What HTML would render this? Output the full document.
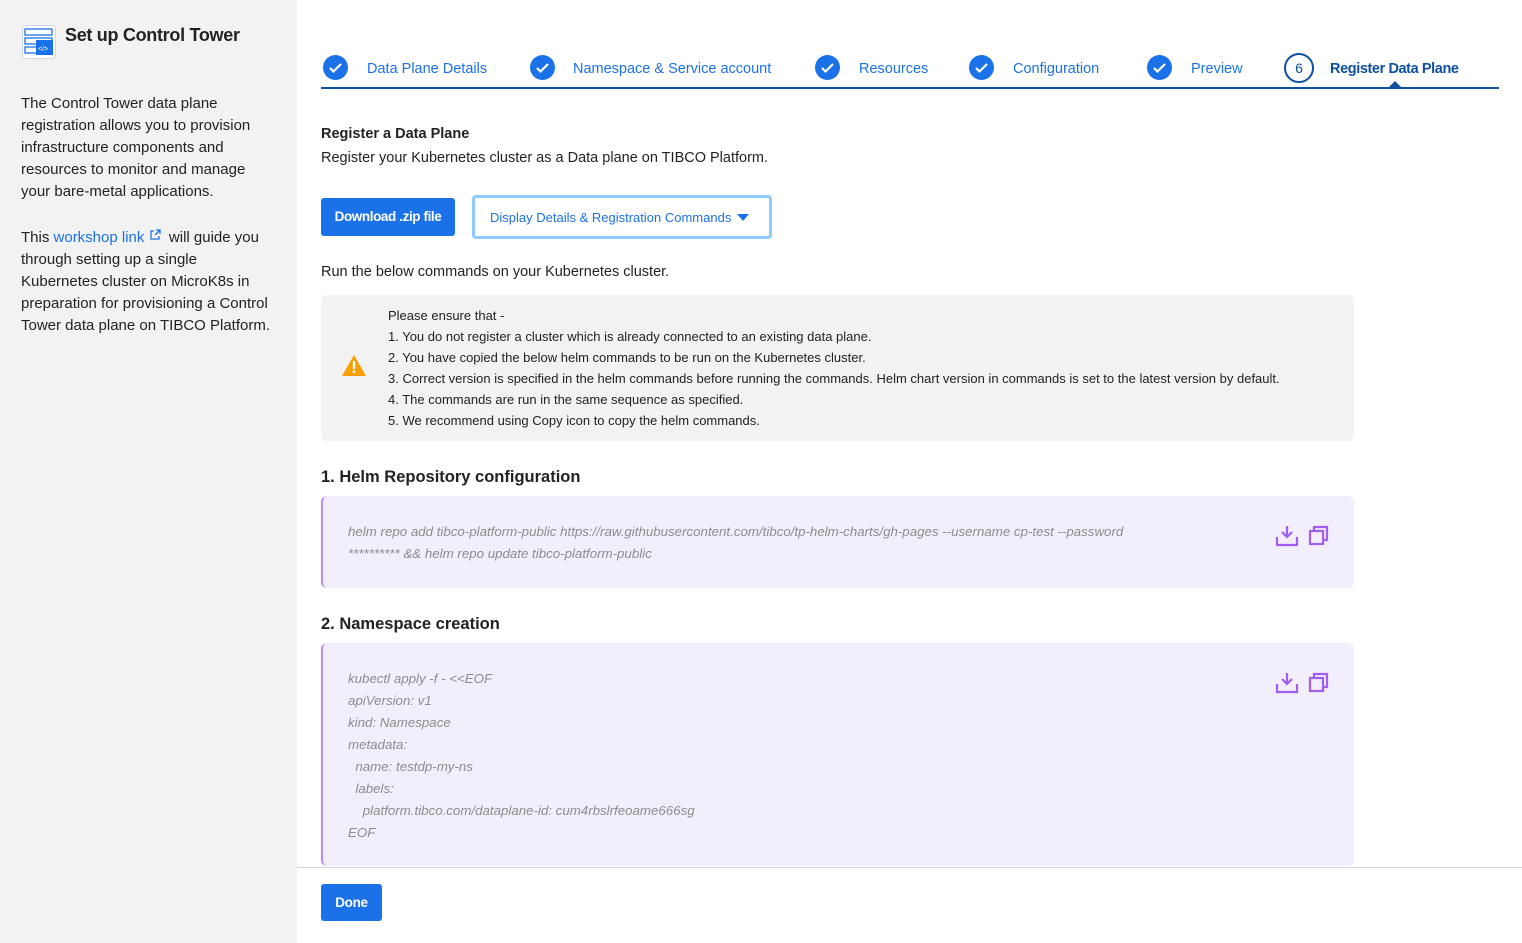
<!DOCTYPE html>
<html><head><meta charset="utf-8"><style>
*{margin:0;padding:0;box-sizing:border-box}
body{width:1522px;height:943px;font-family:"Liberation Sans",sans-serif;color:#222;background:#fff;position:relative;overflow:hidden}
.side{position:absolute;left:0;top:0;width:297px;height:943px;background:#f2f2f2}
.a{position:absolute;white-space:nowrap}
.side p{position:absolute;left:21px;font-size:15px;line-height:22px;color:#222;white-space:nowrap}
.chk{position:absolute;width:25px;height:25px;border-radius:50%;background:#1b72e8}
.chk svg{position:absolute;left:5px;top:6px}
.st{position:absolute;top:61px;font-size:14.5px;color:#1b72e8}
.warn{position:absolute;left:321px;top:295px;width:1033px;height:146px;background:#f2f2f2;border-radius:6px}
.warn div{position:absolute;left:67px;font-size:13px;color:#222;white-space:nowrap}
.code{position:absolute;left:321px;width:1033px;background:#f3eefc;border-left:2px solid #b98af0;border-radius:6px}
.code div{position:absolute;left:25px;font-size:13.3px;font-style:italic;color:#8c8c8c;white-space:nowrap}
h3{position:absolute;left:321px;font-size:16.5px;font-weight:bold;color:#222}
</style></head><body>
<div class="side">
<svg class="a" style="left:22px;top:25px" width="34" height="34" viewBox="0 0 34 34">
<rect x="0.5" y="0.5" width="33" height="33" rx="3" fill="#fff" stroke="#d0d8e8"/>
<rect x="3" y="4" width="27" height="6" fill="none" stroke="#1b72e8" stroke-width="1.3"/>
<rect x="3" y="13" width="27" height="6" fill="none" stroke="#1b72e8" stroke-width="1.3"/>
<rect x="3" y="22" width="27" height="6" fill="none" stroke="#1b72e8" stroke-width="1.3"/>
<rect x="14" y="15" width="17" height="15" fill="#1b72e8"/>
<text x="16" y="26" font-size="7" fill="#fff" font-family="Liberation Sans">&lt;/&gt;</text>
</svg>
<div class="a" style="left:65px;top:25px;font-size:18px;font-weight:bold;color:#222;letter-spacing:-0.3px">Set up Control Tower</div>
<p style="top:93px">The Control Tower data plane<br>registration allows you to provision<br>infrastructure components and<br>resources to monitor and manage<br>your bare-metal applications.</p>
<p style="top:227px">This <span style="color:#1b72e8">workshop link</span> <svg width="12" height="12" viewBox="0 0 12 12" style="vertical-align:1px"><path d="M5 2H2v8h8V7M7 1h4v4M11 1L6 6" fill="none" stroke="#1b72e8" stroke-width="1.3"/></svg>&nbsp; will guide you<br>through setting up a single<br>Kubernetes cluster on MicroK8s in<br>preparation for provisioning a Control<br>Tower data plane on TIBCO Platform.</p>
</div>

<div class="chk" style="left:323px;top:55px"><svg width="15" height="13"><path d="M2 7l3.5 3.5L13 3" fill="none" stroke="#fff" stroke-width="2.2"/></svg></div>
<div class="st" style="left:367px">Data Plane Details</div>
<div class="chk" style="left:530px;top:55px"><svg width="15" height="13"><path d="M2 7l3.5 3.5L13 3" fill="none" stroke="#fff" stroke-width="2.2"/></svg></div>
<div class="st" style="left:573px">Namespace &amp; Service account</div>
<div class="chk" style="left:815px;top:55px"><svg width="15" height="13"><path d="M2 7l3.5 3.5L13 3" fill="none" stroke="#fff" stroke-width="2.2"/></svg></div>
<div class="st" style="left:859px">Resources</div>
<div class="chk" style="left:969px;top:55px"><svg width="15" height="13"><path d="M2 7l3.5 3.5L13 3" fill="none" stroke="#fff" stroke-width="2.2"/></svg></div>
<div class="st" style="left:1013px">Configuration</div>
<div class="chk" style="left:1147px;top:55px"><svg width="15" height="13"><path d="M2 7l3.5 3.5L13 3" fill="none" stroke="#fff" stroke-width="2.2"/></svg></div>
<div class="st" style="left:1191px">Preview</div>
<div class="a" style="left:1284px;top:53px;width:30px;height:30px;border:2px solid #0e4f9e;border-radius:50%;text-align:center;line-height:26px;font-size:14px;color:#0e4f9e">6</div>
<div class="st" style="left:1330px;font-weight:bold;color:#0e4f9e;letter-spacing:-0.4px">Register Data Plane</div>
<div class="a" style="left:321px;top:87px;width:1178px;height:2px;background:#0e4f9e"></div>
<div class="a" style="left:1389px;top:81px;width:0;height:0;border-left:6px solid transparent;border-right:6px solid transparent;border-bottom:6px solid #0e4f9e"></div>

<div class="a" style="left:321px;top:126px;font-size:14.5px;font-weight:bold">Register a Data Plane</div>
<div class="a" style="left:321px;top:150px;font-size:14.5px">Register your Kubernetes cluster as a Data plane on TIBCO Platform.</div>

<div class="a" style="left:321px;top:198px;width:134px;height:38px;background:#1b72e8;border-radius:3px;color:#fff;font-size:13.5px;font-weight:bold;text-align:center;line-height:38px;letter-spacing:-0.4px">Download .zip file</div>
<div class="a" style="left:472px;top:195px;width:300px;height:44px;border:3px solid #8fcbff;border-radius:4px;background:#fff"></div>
<div class="a" style="left:490px;top:210px;font-size:13px;color:#1b72e8">Display Details &amp; Registration Commands</div>
<div class="a" style="left:737px;top:214px;border-left:6px solid transparent;border-right:6px solid transparent;border-top:7px solid #1b72e8"></div>

<div class="a" style="left:321px;top:264px;font-size:14.5px">Run the below commands on your Kubernetes cluster.</div>

<div class="warn">
<svg style="position:absolute;left:21px;top:60px" width="24" height="21" viewBox="0 0 24 21"><path d="M12 0L24 21H0z" fill="#f5a000"/><rect x="10.8" y="6" width="2.4" height="8" fill="#fff"/><rect x="10.8" y="15.5" width="2.4" height="2.4" fill="#fff"/></svg>
<div style="top:13px">Please ensure that -</div>
<div style="top:34px">1. You do not register a cluster which is already connected to an existing data plane.</div>
<div style="top:55px">2. You have copied the below helm commands to be run on the Kubernetes cluster.</div>
<div style="top:76px">3. Correct version is specified in the helm commands before running the commands. Helm chart version in commands is set to the latest version by default.</div>
<div style="top:97px">4. The commands are run in the same sequence as specified.</div>
<div style="top:118px">5. We recommend using Copy icon to copy the helm commands.</div>
</div>

<h3 style="top:468px">1. Helm Repository configuration</h3>
<div class="code" style="top:496px;height:92px">
<div style="top:28px">helm repo add tibco-platform-public https://raw.githubusercontent.com/tibco/tp-helm-charts/gh-pages --username cp-test --password</div>
<div style="top:50px">********** &amp;&amp; helm repo update tibco-platform-public</div>
<svg style="position:absolute;left:952px;top:28px" width="60" height="24" viewBox="0 0 60 24"><path d="M12 2v11M7 8l5 5 5-5M2 13v8h20v-8" fill="none" stroke="#a25ef0" stroke-width="2.2"/><rect x="35" y="7" width="13" height="13" fill="none" stroke="#a25ef0" stroke-width="2.2"/><path d="M39 7V3h13v13h-4" fill="none" stroke="#a25ef0" stroke-width="2.2"/></svg>
</div>

<h3 style="top:615px">2. Namespace creation</h3>
<div class="code" style="top:643px;height:223px">
<div style="top:28px">kubectl apply -f - &lt;&lt;EOF</div>
<div style="top:50px">apiVersion: v1</div>
<div style="top:72px">kind: Namespace</div>
<div style="top:94px">metadata:</div>
<div style="top:116px">&nbsp; name: testdp-my-ns</div>
<div style="top:138px">&nbsp; labels:</div>
<div style="top:160px">&nbsp;&nbsp;&nbsp; platform.tibco.com/dataplane-id: cum4rbslrfeoame666sg</div>
<div style="top:182px">EOF</div>
<svg style="position:absolute;left:952px;top:28px" width="60" height="24" viewBox="0 0 60 24"><path d="M12 2v11M7 8l5 5 5-5M2 13v8h20v-8" fill="none" stroke="#a25ef0" stroke-width="2.2"/><rect x="35" y="7" width="13" height="13" fill="none" stroke="#a25ef0" stroke-width="2.2"/><path d="M39 7V3h13v13h-4" fill="none" stroke="#a25ef0" stroke-width="2.2"/></svg>
</div>

<div class="a" style="left:297px;top:867px;width:1225px;height:76px;background:#fff;border-top:1px solid #d6d6d6"></div>
<div class="a" style="left:321px;top:884px;width:61px;height:37px;background:#1b72e8;border-radius:3px;color:#fff;font-size:13.5px;font-weight:bold;text-align:center;line-height:37px;letter-spacing:-0.3px">Done</div>
</body></html>
